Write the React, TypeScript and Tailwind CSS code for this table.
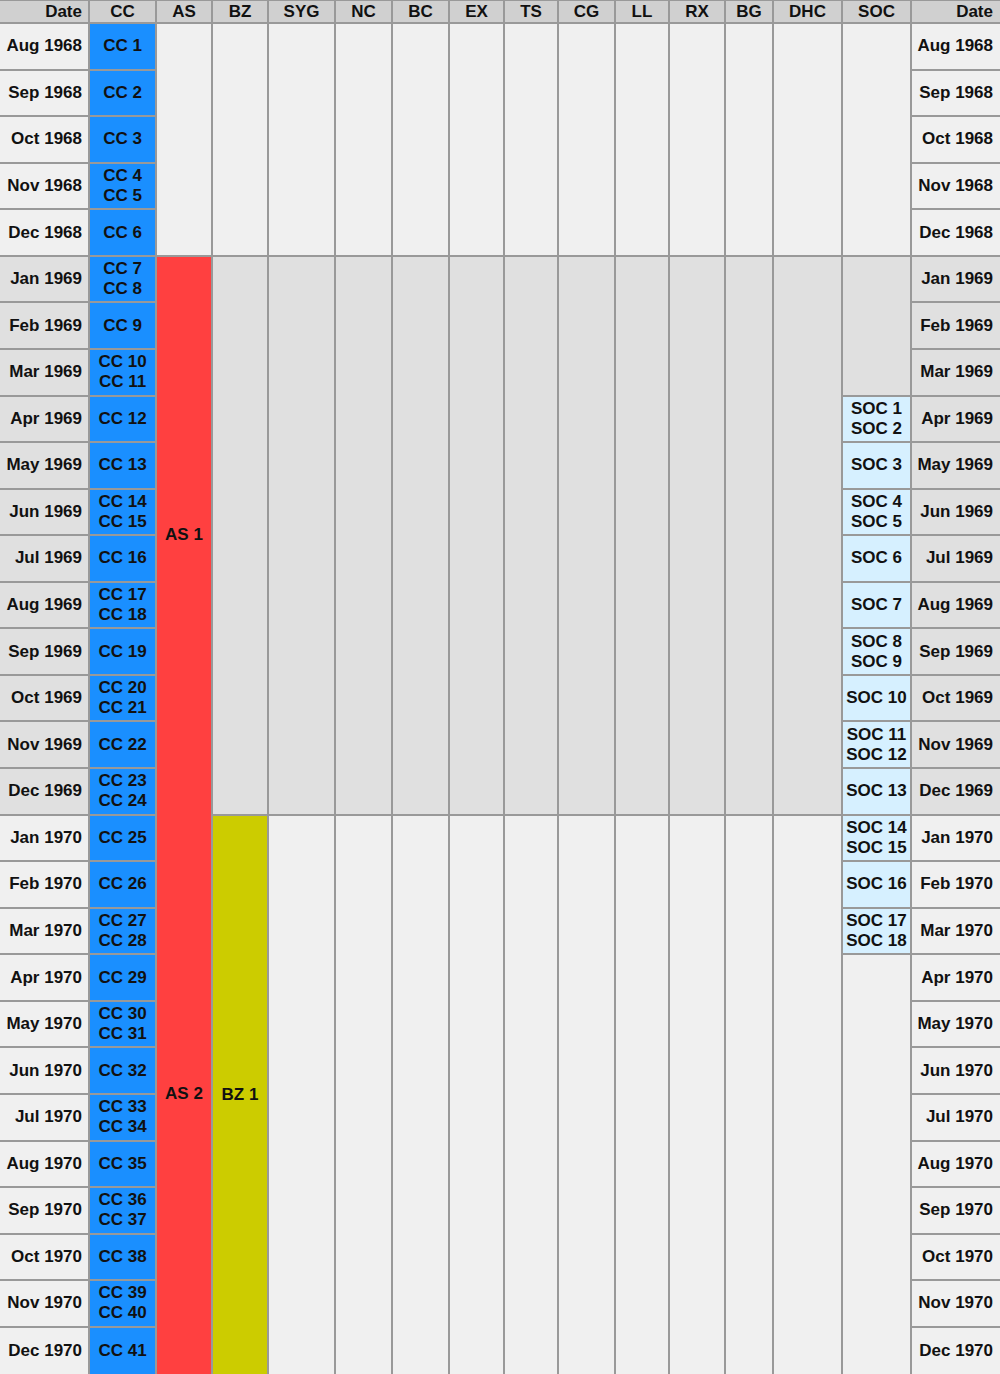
const months = ["Jan", "Feb", "Mar", "Apr", "May", "Jun", "Jul", "Aug", "Sep", "Oct", "Nov", "Dec"];

const groups = ["AS", "BZ", "SYG", "NC", "BC", "EX", "TS", "CG", "LL", "RX", "BG", "DHC", "SOC"];

// 29 months, Aug 1968 .. Dec 1970
const rows = Array.from({ length: 29 }, (_, i) => {
  const m = (7 + i) % 12;
  const y = 1968 + Math.floor((7 + i) / 12);
  return { label: `${months[m]} ${y}`, year: y };
});

const ccIssues: number[][] = [
  [1], [2], [3], [4, 5], [6],
  [7, 8], [9], [10, 11], [12], [13], [14, 15], [16], [17, 18], [19], [20, 21], [22], [23, 24],
  [25], [26], [27, 28], [29], [30, 31], [32], [33, 34], [35], [36, 37], [38], [39, 40], [41],
];

// SOC issues keyed by row index
const socIssues: Record<number, number[]> = {
  8: [1, 2], 9: [3], 10: [4, 5], 11: [6], 12: [7], 13: [8, 9], 14: [10], 15: [11, 12], 16: [13],
  17: [14, 15], 18: [16], 19: [17, 18],
};

const spanClass: Record<number, string> = {
  1: "",
  3: "row-span-3",
  5: "row-span-5",
  9: "row-span-9",
  12: "row-span-12",
};

type Cell = { key: string; span?: number; className: string; lines?: string[] };

function Lines({ lines }: { lines?: string[] }) {
  if (!lines) return null;
  return (
    <div className="flex flex-col items-center leading-[20px]">
      {lines.map((l) => (
        <span key={l} className="whitespace-nowrap">{l}</span>
      ))}
    </div>
  );
}

function buildCells(): Cell[] {
  const cells: Cell[] = [];
  rows.forEach((row, i) => {
    const shade = row.year === 1969 ? "bg-[#e0e0e0]" : "bg-[#f0f0f0]";
    const dateCell = (side: string): Cell => ({
      key: `${side}-${i}`,
      className: `${shade} justify-end ${side === "l" ? "pr-[6px]" : "pr-[7px]"}`,
      lines: [row.label],
    });

    cells.push(dateCell("l"));
    cells.push({
      key: `cc-${i}`,
      className: "bg-[#1a8fff] justify-center",
      lines: ccIssues[i].map((n) => `CC ${n}`),
    });

    if (i === 0) {
      groups.forEach((g) =>
        cells.push({ key: `e68-${g}`, span: 5, className: "bg-[#f0f0f0]" })
      );
    }

    if (i === 5) {
      cells.push({ key: "as1", span: 12, className: "bg-[#ff4040] justify-center", lines: ["AS 1"] });
      groups.slice(1, 12).forEach((g) =>
        cells.push({ key: `e69-${g}`, span: 12, className: "bg-[#e0e0e0]" })
      );
      cells.push({ key: "soc-e69", span: 3, className: "bg-[#e0e0e0]" });
    }

    if (i === 17) {
      cells.push({ key: "as2", span: 12, className: "bg-[#ff4040] justify-center -mt-[2px]", lines: ["AS 2"] });
      cells.push({ key: "bz1", span: 12, className: "bg-[#cccc00] justify-center", lines: ["BZ 1"] });
      groups.slice(2, 12).forEach((g) =>
        cells.push({ key: `e70-${g}`, span: 12, className: "bg-[#f0f0f0]" })
      );
    }

    if (socIssues[i]) {
      cells.push({
        key: `soc-${i}`,
        className: "bg-[#d6f0ff] justify-center",
        lines: socIssues[i].map((n) => `SOC ${n}`),
      });
    }

    if (i === 20) {
      cells.push({ key: "soc-e70", span: 9, className: "bg-[#f0f0f0]" });
    }

    cells.push(dateCell("r"));
  });
  return cells;
}

export default function App() {
  const cells = buildCells();
  return (
    <div className="h-[1374px] w-[1000px] overflow-hidden bg-[#f0f0f0] font-['Liberation_Sans',Arial,sans-serif] text-[17px] font-bold text-[#111]">
      <div className="grid h-full grid-cols-[88px_65px_54px_54px_65px_55px_55px_53px_52px_55px_52px_54px_46px_67px_67px_88px] grid-rows-[21px_repeat(28,44.57px)_46px] gap-[2px] bg-[#999] pt-[1px]">
        <div className="flex items-center justify-end bg-[#d0d0d0] pr-[6px]">Date</div>
        {["CC", ...groups].map((h) => (
          <div key={h} className="flex items-center justify-center bg-[#d0d0d0]">
            {h}
          </div>
        ))}
        <div className="flex items-center justify-end bg-[#d0d0d0] pr-[7px]">Date</div>

        {cells.map((c) => (
          <div key={c.key} className={`flex items-center ${spanClass[c.span ?? 1]} ${c.className}`}>
            <Lines lines={c.lines} />
          </div>
        ))}
      </div>
    </div>
  );
}
